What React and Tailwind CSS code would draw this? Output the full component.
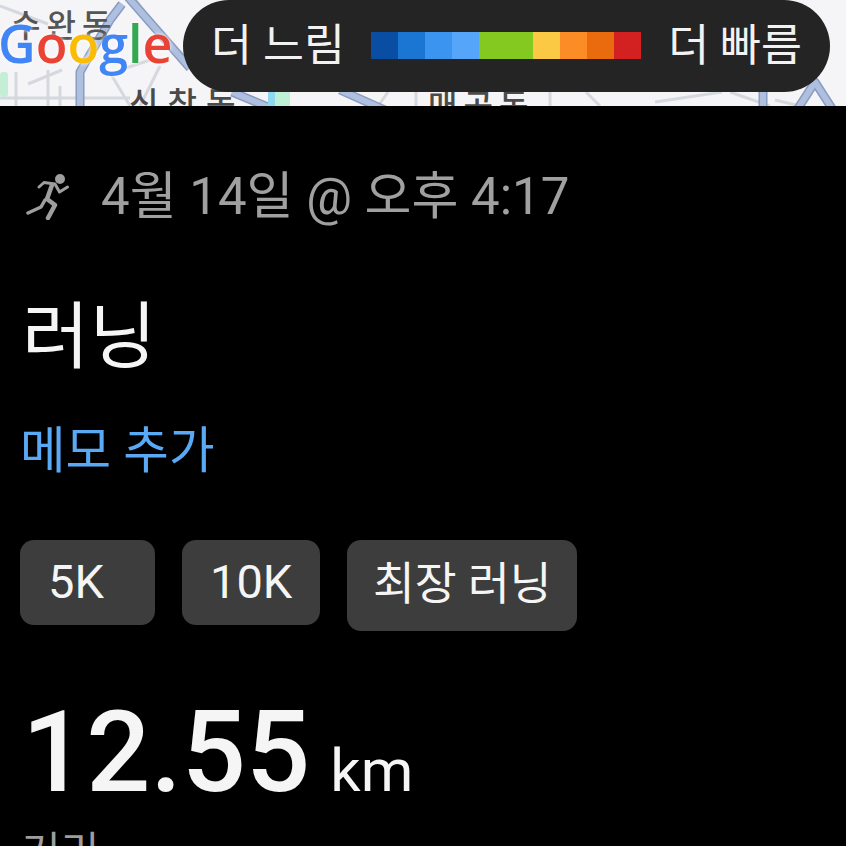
import React from 'react';

const ramp = [
  { color: 'bg-[#0a4ea3]', width: 'w-[27px]' },
  { color: 'bg-[#1a76d2]', width: 'w-[27px]' },
  { color: 'bg-[#3b94f0]', width: 'w-[27px]' },
  { color: 'bg-[#55a6fb]', width: 'w-[27px]' },
  { color: 'bg-[#84c91f]', width: 'w-[54px]' },
  { color: 'bg-[#fbc944]', width: 'w-[27px]' },
  { color: 'bg-[#fb8c26]', width: 'w-[27px]' },
  { color: 'bg-[#ea6a0e]', width: 'w-[27px]' },
  { color: 'bg-[#d32020]', width: 'w-[27px]' },
];

const highways = 'M80 110 V72 L110 20 L122 4 M127 -4 L190 68 M232 92 L275 110 M340 90 L385 110 M763 90 V110 M797 110 L815 82 L833 110';

function MapRoads() {
  return (
    <svg className="absolute inset-0 blur-[0.5px]" width="846" height="106" viewBox="0 0 846 106" fill="none">
      <g stroke="#d5d8de" strokeWidth="3">
        <path d="M0 6 L48 24 M0 98 H130 M16 72 V106 M48 70 V106 M60 86 V106 M28 84 L62 70 M136 0 L150 20 M120 70 L150 60 M112 76 L130 106 M160 66 L140 106" />
        <path d="M586 92 L600 106 M550 92 V106 M655 102 L722 92 M730 92 L770 106 M775 100 L800 106 M388 92 L378 106 M416 92 V106" />
      </g>
      <path d={highways} stroke="#8a9cc0" strokeWidth="9" strokeLinejoin="round" />
      <path d={highways} stroke="#aebfe0" strokeWidth="6" strokeLinejoin="round" />
      <rect x="0" y="72" width="8" height="25" rx="3" fill="#c4eed6" />
      <rect x="268" y="92" width="7" height="14" fill="#8fd8f0" />
      <rect x="275" y="92" width="15" height="14" fill="#bdf0d4" />
    </svg>
  );
}

function RunnerIcon() {
  return (
    <svg width="44" height="48" viewBox="26 171 44 48" fill="none" stroke="#9e9e9e" strokeLinejoin="round" strokeLinecap="round">
      <circle cx="60" cy="178" r="5" fill="#9e9e9e" stroke="none" />
      <path d="M39 186 L44 181.5 L55 183 L59.5 191 L67.5 186" strokeWidth="3" />
      <path d="M52 184 L47 198 L55 204 L48 217" strokeWidth="4.5" />
      <path d="M45 199 L41 206 L28 212" strokeWidth="3.5" />
    </svg>
  );
}

export default function App() {
  return (
    <div className="w-[846px] h-[846px] overflow-hidden bg-black font-['Roboto','Noto_Sans_CJK_KR',sans-serif]">
      <div className="relative h-[106px] overflow-hidden bg-[#f5f5f7]">
        <MapRoads />
        <span className="absolute left-[11px] top-[6px] text-[32px] leading-[40px] tracking-[6px] font-medium text-[#555]">수완동</span>
        <span className="absolute left-[129px] top-[84px] text-[32px] leading-[40px] tracking-[9px] font-medium text-[#4a4a4a]">신창동</span>
        <span className="absolute left-[428px] top-[86px] text-[32px] leading-[40px] tracking-[6px] font-medium text-[#4a4a4a]">매곡동</span>
        <div className="absolute left-[-2px] top-[11px] text-[52px] leading-[64px] font-semibold font-['Open_Sans',sans-serif] [text-shadow:0_0_4px_white]">
          <span className="text-[#4285f4]">G</span>
          <span className="text-[#ea4335]">o</span>
          <span className="text-[#fbbc05]">o</span>
          <span className="text-[#4285f4]">g</span>
          <span className="text-[#34a853]">l</span>
          <span className="text-[#ea4335]">e</span>
        </div>
        <div className="absolute left-[183px] top-0 flex h-[92px] w-[647px] items-center justify-between rounded-[46px] bg-[#242424] px-[28px]">
          <span className="text-[44.5px] leading-none text-[#f2f2f2]">더 느림</span>
          <div className="-mt-px -ml-px flex h-[27px]">
            {ramp.map((step, i) => (
              <div key={i} className={`${step.color} ${step.width}`} />
            ))}
          </div>
          <span className="text-[44.5px] leading-none text-[#f2f2f2]">더 빠름</span>
        </div>
      </div>

      <div className="pl-[22px] pt-[60px]">
        <div className="flex items-center gap-[31px] pl-[4px] h-[60px]">
          <RunnerIcon />
          <span className="text-[51px] leading-none text-[#a0a0a0]">4월 14일 @ 오후 4:17</span>
        </div>

        <h1 className="mt-[71px] text-[73px] leading-[80px] text-[#f5f5f5]">러닝</h1>
        <p className="mt-[44px] -ml-[2px] text-[49.5px] leading-[60px] text-[#5aa9f5]">메모 추가</p>

        <div className="mt-[59px] flex items-start gap-[27px] -ml-[2px]">
          <div className="flex h-[85px] w-[135px] items-center rounded-[14px] bg-[#3d3d3d] pl-[28px] text-[47px] text-[#f5f5f5]">5K</div>
          <div className="flex h-[85px] w-[138px] items-center rounded-[14px] bg-[#3d3d3d] pl-[28px] text-[47px] text-[#f5f5f5]">10K</div>
          <div className="flex h-[91px] w-[230px] items-center rounded-[14px] bg-[#3d3d3d] pl-[26px] text-[45.5px] text-[#f5f5f5]">최장 러닝</div>
        </div>

        <div className="mt-[65px] flex items-baseline gap-[20px]">
          <span className="text-[113px] leading-[113px] font-medium text-[#f5f5f5]">12.55</span>
          <span className="text-[60px] leading-none text-[#f5f5f5]">km</span>
        </div>
        <p className="mt-[16px] text-[42px] leading-[56px] text-[#9e9e9e]">거리</p>
      </div>
    </div>
  );
}
